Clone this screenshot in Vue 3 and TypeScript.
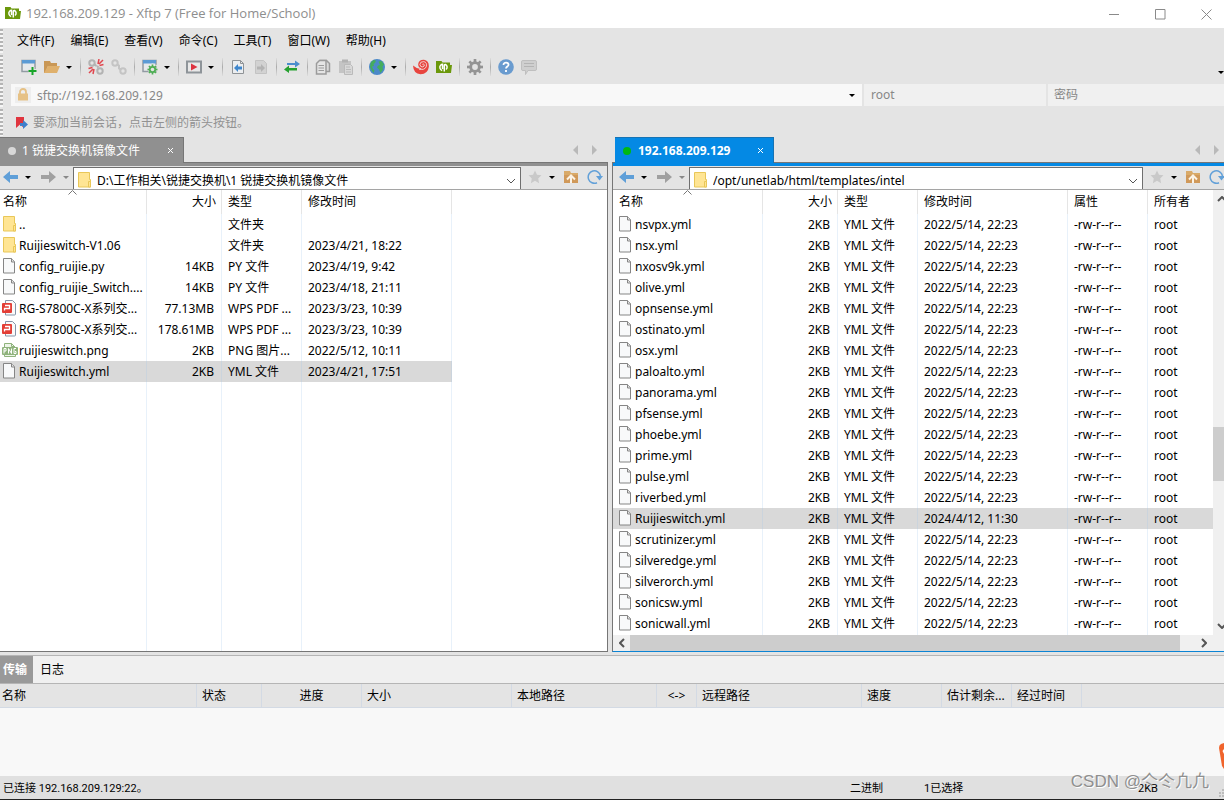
<script setup lang="ts">
import { ref } from 'vue'

interface FileRow {
  icon: string
  name: string
  size: string
  type: string
  time: string
  attr?: string
  owner?: string
  selected?: boolean
}

const windowBody = '<rect x="1" y="1.500" width="13" height="11" fill="#e6e9ec" stroke="#929ba3" stroke-width="1.500"/><rect x="1" y="1" width="13" height="3.500" fill="#5b9bd5"/>'
const gearShape = (cx: number, cy: number, r: number, color: string, hole: string): string => {
  let s = ''
  for (let a = 0; a < 180; a += 45) {
    s += `<rect x="${cx - r}" y="${cy - r / 6}" width="${r * 2}" height="${r / 3}" fill="${color}" transform="rotate(${a} ${cx} ${cy})"/>`
  }
  return s + `<circle cx="${cx}" cy="${cy}" r="${r * 0.72}" fill="${color}"/><circle cx="${cx}" cy="${cy}" r="${r * 0.36}" fill="${hole}"/>`
}

const icons: Record<string, string> = {
  app: '<path d="M0 2h5.500l1 1.500H14V6h2l-1 8H0z" fill="#6b980b"/><path d="M6.200 11.500A3.300 3.300 0 0 1 4.800 6Q5.500 5.200 6.500 5.200V10M8.300 12.500V6.500Q8.500 5.200 9.500 5.500a3 3 0 0 1 .5 5" fill="none" stroke="#fff" stroke-width="1.500"/>',
  add: windowBody + '<path d="M11.500 8v8M7.500 12h8" stroke="#e4e4e4" stroke-width="4"/><path d="M11.500 8v8M7.500 12h8" stroke="#18a52a" stroke-width="2"/>',
  open: '<path d="M0 2h6l1 2h6v3H4L1 14H0z" fill="#c99755"/><path d="M4 7h12l-3 7H0z" fill="#dfb06c"/>',
  unlink: '<g fill="none" stroke="#b3b3b3" stroke-width="2"><circle cx="4" cy="4" r="2.700"/><circle cx="12" cy="12" r="2.700"/></g><path d="M6 5l2.500 2M10.500 8.500L9 7" stroke="#b3b3b3" stroke-width="2"/><g stroke="#e0474f" stroke-width="1.500"><path d="M10 5l1-5M11 5l4-4M11.500 6.500l4-1M6 10l-1 5M5 10l-4 4M4.500 8.500l-4 1"/></g>',
  link: '<g fill="none" stroke="#c4c4c4" stroke-width="2"><circle cx="4" cy="4" r="2.700"/><circle cx="12" cy="12" r="2.700"/><path d="M6 5.500l2 1v3l2 1"/></g>',
  props: windowBody + gearShape(10.5, 10.5, 6, '#e4e4e4', '#e4e4e4') + gearShape(10.5, 10.5, 5, '#4fae55', '#e4e4e4'),
  play: '<rect x="1" y="2.500" width="14" height="11" fill="#e8e8e8" stroke="#8e9499" stroke-width="2"/><path d="M5 4.500l6.500 3.500L5 11.500z" fill="#dd3340"/>',
  docLeft: '<path d="M2.500 1.500h8l3 3v10h-11z" fill="#eceef0" stroke="#8f9396"/><path d="M10.500 1.500v3h3" fill="none" stroke="#8f9396"/><path d="M4 9l4-4v2.500h4v3H8V13z" fill="#3f87cd"/>',
  docRight: '<path d="M2.500 1.500h8l3 3v10h-11z" fill="#d2d2d2" stroke="#c3c3c3"/><path d="M12 9L8 5v2.500H4v3h4V13z" fill="#b3b3b3"/>',
  swap: '<path d="M3 4h8V1.500L16 5l-5 3.500V6H3z" fill="#4b8dcd"/><path d="M13 9H5V6.500L0 10.500 5 14v-2.500h8z" fill="#25a12f"/>',
  copy: '<path d="M5.500 1.500h6l3 3v8h-9z" fill="#d9d9d9" stroke="#9b9b9b" stroke-width="1.500"/><path d="M1.500 4.500l3-3h6.500v13.500H1.500z" fill="#e4e4e4" stroke="#9b9b9b" stroke-width="1.500"/><path d="M3.500 6.500h5.500M3.500 9h5.500M3.500 11.500h5.500" stroke="#9b9b9b"/>',
  paste: '<path d="M1 2h12v12H1z" fill="#c4c4c4"/><path d="M4 0.500h6v3H4z" fill="#b2b2b2"/><path d="M6.500 5.500h6l2 2v8h-8z" fill="#d8d8d8" stroke="#bababa"/><path d="M8 8h4M8 10.500h5M8 13h5" stroke="#bababa"/>',
  globe: '<circle cx="8" cy="8" r="8" fill="#4b89c8"/><path d="M1.800 3.500L4.500 1l2.500.5L6 4 4.500 5 5 7 3 7.500 4 10l1.500 1.500-1 2.500-2-3L1 8zM9.500 2.500l3-.5 2.500 3.500-1.500 2 .5 3-2.500 3.500-1.500-3.500-2-2 1-2 2-.5z" fill="#44ad5d"/>',
  shell: '<path d="M0 6.500Q.500 15 7.500 15.200 15 15 15.800 8 16.200 1.500 11 .8 6 .6 5.200 5 5 9 9 9.800 4.500 10.500 0 6.500z" fill="#e8453f"/><path d="M6 10.200q5.500 1.200 7.200-2.400 1.200-4.400-2.400-5.200-3.800-.2-3.900 2.900.3 2.700 2.900 2.400 2-.6 1.400-2.300-.9-1.200-1.900-.2" fill="none" stroke="#f3dedd" stroke-width=".900"/>',
  gear: gearShape(8, 8, 8, '#949494', '#e4e4e4'),
  help: '<circle cx="8" cy="8" r="7.800" fill="#699bcf"/><path d="M5.500 6c0-3.500 5.500-3 5 0-.2 1.500-2.500 1.700-2.500 3.500M8 11v2" fill="none" stroke="#fff" stroke-width="1.800"/>',
  chat: '<path d="M2 1.500h12q1.500 0 1.500 1.500v7q0 1.500-1.500 1.500H7L4.500 15.500v-4H2Q.500 11.500.500 10V3Q.500 1.500 2 1.500z" fill="#cfcfcf" stroke="#bfbfbf"/><path d="M3 4.500h10M3 7.500h10" stroke="#b4b4b4"/>',
  lock: '<path d="M5 7V5a3 3 0 0 1 6 0v2" fill="none" stroke="#e6c185" stroke-width="1.800"/><rect x="3" y="6.500" width="10" height="7" fill="#e6c185"/>',
  flag: '<path d="M2 2h8v11L6 9.500 2 13z" fill="#e0353f"/><path d="M6 8h3V5l5 4.500L9 14v-3H6z" fill="#3f80cc"/>',
  back: '<path d="M0 8l7-6v4h8v4H7v4z" fill="#5f9fd8"/>',
  forward: '<path d="M15 8L8 2v4H0v4h8v4z" fill="#a0a0a0"/>',
  star: '<path d="M8 1.500l2 4.300 4.500.5-3.300 3.200.9 4.700L8 11.800l-4.100 2.400.9-4.700L1.500 6.300l4.500-.5z" fill="#c9c9c9"/>',
  up: '<path d="M1 2h6l1 2h7v10H1z" fill="#d9aa69"/><path d="M1 6h14v8H1z" fill="#d0995a"/><path d="M4 10.500l4-4 4 4M8 7v7" fill="none" stroke="#fbf3e6" stroke-width="2"/>',
  refresh: '<path d="M10 13.700A6.200 6.200 0 1 1 13.500 7" fill="none" stroke="#62a0d8" stroke-width="1.500"/><path d="M9 7h7L12.500 11.500z" fill="#62a0d8"/>',
  folder: '<path d="M1.500.500h11v7h1v7.500h-12z" fill="#ffe594" stroke="#e9c758"/><path d="M11.500 15V9.500h2V15z" fill="#ffe594" stroke="#e9c758"/>',
  file: '<path d="M1.500.500h8l3 3v11.500H1.500z" fill="#f8f9fa" stroke="#858585"/><path d="M9.500.500v3.500H12.500" fill="#e3e3e3" stroke="#858585"/>',
  pdf: '<path d="M3.500.500h7l3 3v10.500q0 1-1 1h-9z" fill="#fafafa" stroke="#8595a8"/><rect x="0" y="3" width="10" height="10" rx="1" fill="#e33e36"/><path d="M2.500 10.500V8.500h5V5.500H3" fill="none" stroke="#fff" stroke-width="1.300"/>',
  png: '<path d="M2.500 5V1.500h7l4 4M2.500 12v2.500h11V12" fill="#edf5e8" stroke="#8fb37c"/><path d="M9.500 1.500v3h3.500" fill="none" stroke="#8fb37c"/><rect x="0" y="5" width="16" height="8" rx="1" fill="#8fb37c"/><path d="M2 11.500V6.500h2v2.500H2M6.500 11.500v-5l3 5v-5M14 6.500h-2v5h2V9.500h-1" fill="none" stroke="#fff"/>',
}

const menus = ['文件(F)', '编辑(E)', '查看(V)', '命令(C)', '工具(T)', '窗口(W)', '帮助(H)']

interface Tool { kind: 'icon' | 'caret' | 'sep'; icon?: string; label?: string }
const tool = (icon: string, label: string): Tool => ({ kind: 'icon', icon, label })
const caret: Tool = { kind: 'caret' }
const sep: Tool = { kind: 'sep' }
const tools: Tool[] = [
  tool('add', '新建'), tool('open', '打开'), caret, sep,
  tool('unlink', '断开'), tool('link', '重新连接'), sep,
  tool('props', '属性'), caret, sep,
  tool('play', '启动'), caret, sep,
  tool('docLeft', '左传'), tool('docRight', '右传'), sep,
  tool('swap', '同步'), sep,
  tool('copy', '复制'), tool('paste', '粘贴'), sep,
  tool('globe', '编码'), caret, sep,
  tool('shell', 'Xshell'), tool('app', 'Xftp'), sep,
  tool('gear', '选项'), sep,
  tool('help', '帮助'), tool('chat', '反馈'),
]

const row = (icon: string, name: string, size: string, type: string, time: string, selected = false): FileRow =>
  ({ icon, name, size, type, time, selected })

const localRows: FileRow[] = [
  row('folder', '..', '', '文件夹', ''),
  row('folder', 'Ruijieswitch-V1.06', '', '文件夹', '2023/4/21, 18:22'),
  row('file', 'config_ruijie.py', '14KB', 'PY 文件', '2023/4/19, 9:42'),
  row('file', 'config_ruijie_Switch....', '14KB', 'PY 文件', '2023/4/18, 21:11'),
  row('pdf', 'RG-S7800C-X系列交...', '77.13MB', 'WPS PDF ...', '2023/3/23, 10:39'),
  row('pdf', 'RG-S7800C-X系列交...', '178.61MB', 'WPS PDF ...', '2023/3/23, 10:39'),
  row('png', 'ruijieswitch.png', '2KB', 'PNG 图片...', '2022/5/12, 10:11'),
  row('file', 'Ruijieswitch.yml', '2KB', 'YML 文件', '2023/4/21, 17:51', true),
]

const remoteNames = [
  'nsvpx', 'nsx', 'nxosv9k', 'olive', 'opnsense', 'ostinato', 'osx', 'paloalto', 'panorama', 'pfsense',
  'phoebe', 'prime', 'pulse', 'riverbed', 'Ruijieswitch', 'scrutinizer', 'silveredge', 'silverorch', 'sonicsw', 'sonicwall',
]
const remoteRows: FileRow[] = remoteNames.map((n) => {
  const selected = n === 'Ruijieswitch'
  return {
    ...row('file', n + '.yml', '2KB', 'YML 文件', selected ? '2024/4/12, 11:30' : '2022/5/14, 22:23', selected),
    attr: '-rw-r--r--',
    owner: 'root',
  }
})

const panes = [
  { id: 'local', tab: '1 锐捷交换机镜像文件', path: ref('D:\\工作相关\\锐捷交换机\\1 锐捷交换机镜像文件'), rows: localRows, extra: false },
  { id: 'remote', tab: '192.168.209.129', path: ref('/opt/unetlab/html/templates/intel'), rows: remoteRows, extra: true },
]

const queueColumns = [
  { label: '名称', cls: 'q-name' },
  { label: '状态', cls: 'q-state' },
  { label: '进度', cls: 'q-progress' },
  { label: '大小', cls: 'q-size' },
  { label: '本地路径', cls: 'q-local' },
  { label: '<->', cls: 'q-dir' },
  { label: '远程路径', cls: 'q-remote' },
  { label: '速度', cls: 'q-speed' },
  { label: '估计剩余...', cls: 'q-left' },
  { label: '经过时间', cls: 'q-left' },
]

const address = ref('sftp://192.168.209.129')
const user = ref('root')
const password = ref('')
</script>

<template>
  <div class="window">
    <header class="titlebar">
      <svg class="icon" viewBox="0 0 16 16" v-html="icons.app"></svg>
      <span class="title">192.168.209.129 - Xftp 7 (Free for Home/School)</span>
      <div class="win-buttons">
        <button aria-label="最小化"><svg viewBox="0 0 11 11"><path d="M0 5.500h10" /></svg></button>
        <button aria-label="最大化"><svg viewBox="0 0 11 11"><path d="M.500.500h9.500v9.500H.500z" /></svg></button>
        <button aria-label="关闭"><svg viewBox="0 0 11 11"><path d="M.500.500l10 10M10.500.500l-10 10" /></svg></button>
      </div>
    </header>

    <nav class="menubar grip">
      <button v-for="m in menus" :key="m">{{ m }}</button>
    </nav>

    <div class="toolbar grip">
      <template v-for="(t, i) in tools" :key="i">
        <button v-if="t.kind === 'icon'" class="tool" :aria-label="t.label">
          <svg class="icon" viewBox="0 0 16 16" v-html="icons[t.icon!]"></svg>
        </button>
        <button v-else-if="t.kind === 'caret'" class="tool-caret" aria-label="更多"><i class="caret"></i></button>
        <i v-else class="sep"></i>
      </template>
      <button class="overflow" aria-label="工具栏选项"><i class="caret"></i></button>
    </div>

    <div class="address grip">
      <div class="host">
        <span class="lock"><svg class="icon" viewBox="0 0 16 16" v-html="icons.lock"></svg></span>
        <input v-model="address" aria-label="地址" />
        <button aria-label="展开地址"><i class="caret"></i></button>
      </div>
      <input v-model="user" class="cred user" aria-label="用户名" />
      <input v-model="password" class="cred pass" type="password" placeholder="密码" aria-label="密码" />
    </div>

    <div class="hint grip">
      <button aria-label="添加当前会话"><svg class="icon" viewBox="0 0 16 16" v-html="icons.flag"></svg></button>
      <span>要添加当前会话，点击左侧的箭头按钮。</span>
    </div>

    <main class="panes">
      <section v-for="p in panes" :key="p.id" class="pane" :class="p.id">
        <div class="tabs">
          <div class="tab">
            <i class="dot"></i>
            <span class="tab-label">{{ p.tab }}</span>
            <button aria-label="关闭标签"><svg viewBox="0 0 5 5"><path d="M0 0l5 5M5 0L0 5" /></svg></button>
          </div>
          <div class="tab-nav">
            <button aria-label="上一个标签"><svg viewBox="0 0 5 10"><path d="M5 0v10L0 5z" /></svg></button>
            <button aria-label="下一个标签"><svg viewBox="0 0 5 10"><path d="M0 0v10l5-5z" /></svg></button>
          </div>
        </div>
        <div class="frame">
          <div class="nav">
            <div class="nav-left">
              <button aria-label="后退"><svg class="icon" viewBox="0 0 16 16" v-html="icons.back"></svg></button>
              <button class="drop" aria-label="后退历史"><i class="caret"></i></button>
              <button aria-label="前进"><svg class="icon" viewBox="0 0 16 16" v-html="icons.forward"></svg></button>
              <button class="drop" aria-label="前进历史"><i class="caret dim"></i></button>
            </div>
            <div class="path">
              <svg class="icon" viewBox="0 0 16 16" v-html="icons.folder"></svg>
              <input v-model="p.path.value" aria-label="路径" />
              <button aria-label="展开路径"><svg class="chev" viewBox="0 0 10 6"><path d="M1 1l4 4 4-4" /></svg></button>
            </div>
            <div class="nav-right">
              <button aria-label="收藏"><svg class="icon" viewBox="0 0 16 16" v-html="icons.star"></svg></button>
              <button class="drop" aria-label="收藏列表"><i class="caret"></i></button>
              <button class="up" aria-label="上级目录"><svg class="icon" viewBox="0 0 16 16" v-html="icons.up"></svg></button>
              <button aria-label="刷新"><svg class="icon" viewBox="0 0 16 16" v-html="icons.refresh"></svg></button>
            </div>
          </div>
          <div class="body">
            <div class="list">
              <table>
                <colgroup>
                  <col class="c-name" /><col class="c-size" /><col class="c-type" /><col class="c-time" />
                  <template v-if="p.extra"><col class="c-attr" /><col /></template>
                  <col v-else />
                </colgroup>
                <thead>
                  <tr>
                    <th class="name">名称<svg class="sort" viewBox="0 0 9 5"><path d="M.500 4.500l4-4 4 4" /></svg></th>
                    <th class="size">大小</th>
                    <th>类型</th>
                    <th>修改时间</th>
                    <template v-if="p.extra"><th>属性</th><th class="last">所有者</th></template>
                    <th v-else class="last"></th>
                  </tr>
                </thead>
                <tbody>
                  <tr v-for="(r, i) in p.rows" :key="i" :class="{ selected: r.selected }">
                    <td class="name">
                      <div class="file"><svg class="icon" viewBox="0 0 16 16" v-html="icons[r.icon]"></svg><span>{{ r.name }}</span></div>
                    </td>
                    <td class="size">{{ r.size }}</td>
                    <td>{{ r.type }}</td>
                    <td>{{ r.time }}</td>
                    <template v-if="p.extra"><td>{{ r.attr }}</td><td class="last">{{ r.owner }}</td></template>
                    <td v-else class="last blank"></td>
                  </tr>
                  <tr class="filler">
                    <td></td><td></td><td></td><td></td>
                    <td v-if="p.extra"></td>
                    <td class="last"></td>
                  </tr>
                </tbody>
              </table>
            </div>
            <div v-if="p.extra" class="vscroll">
              <button aria-label="向上滚动"><svg class="arrow" viewBox="0 0 10 6"><path d="M1 5l4-4 4 4" /></svg></button>
              <div class="v-track"><i class="v-before"></i><i class="v-thumb"></i><i class="v-after"></i></div>
              <button aria-label="向下滚动"><svg class="arrow" viewBox="0 0 10 6"><path d="M1 1l4 4 4-4" /></svg></button>
            </div>
          </div>
          <div v-if="p.extra" class="hscroll">
            <button aria-label="向左滚动"><svg viewBox="0 0 6 10"><path d="M5 1L1 5l4 4" /></svg></button>
            <i class="h-thumb"></i>
            <button class="h-end" aria-label="向右滚动"><svg viewBox="0 0 6 10"><path d="M1 1l4 4-4 4" /></svg></button>
          </div>
        </div>
      </section>
    </main>

    <section class="queue">
      <div class="queue-tabs">
        <button class="active">传输</button>
        <button>日志</button>
      </div>
      <table class="queue-table">
        <thead>
          <tr>
            <th v-for="c in queueColumns" :key="c.label" :class="c.cls">{{ c.label }}</th>
            <th class="q-rest"></th>
          </tr>
        </thead>
      </table>
      <svg class="bubble" viewBox="0 0 5 28"><path d="M5 1L2 2Q0 3 0 6l3 18 2 3z" fill="#f0642c" /><path d="M5 7L3.500 9l1.500 3z" fill="#fff" /></svg>
    </section>

    <footer class="status">
      <span class="s-conn">已连接 192.168.209.129:22。</span>
      <span class="s-mode">二进制</span>
      <span class="s-sel">1已选择</span>
      <span class="s-size">2KB</span>
      <span class="watermark">CSDN @亽仒凢凢</span>
      <svg class="resize" viewBox="0 0 5 8"><path d="M3 0h2v2H3zM3 3h2v2H3zM0 3h2v2H0zM3 6h2v2H3zM0 6h2v2H0z" fill="#bcbcbc" /></svg>
    </footer>
  </div>
</template>

<style>
html,
body {
  margin: 0;
  overflow: hidden;
}
</style>

<style scoped>
.window {
  display: flex;
  flex-direction: column;
  height: 100vh;
  box-sizing: border-box;
  border-bottom: 1px solid #222;
  background: #e4e4e4;
  color: #000;
  font: 12px/20px "Noto Sans", "Noto Sans CJK SC", sans-serif;
  overflow: hidden;
}
button,
input {
  margin: 0;
  padding: 0;
  border: 0;
  background: none;
  color: inherit;
  font: inherit;
  outline: none;
  min-width: 0;
}
button {
  display: flex;
  align-items: center;
  justify-content: center;
  flex: none;
}
svg {
  flex: none;
  display: block;
}
.icon {
  width: 16px;
  height: 16px;
}
.caret {
  border: 3px solid transparent;
  border-top-color: #000;
  border-bottom: 0;
}
.caret.dim {
  border-top-color: #888;
}

.titlebar {
  display: flex;
  align-items: center;
  height: 28px;
  padding-left: 5px;
  background: #fff;
  color: #8e8e8e;
  flex: none;
}
.title {
  flex: 1;
  margin-left: 5px;
  padding-bottom: 2px;
  font-family: "Open Sans", "Noto Sans", sans-serif;
  font-size: 13px;
}
.titlebar > .icon {
  margin-bottom: 3px;
}
.win-buttons {
  display: flex;
}
.win-buttons button {
  width: 46px;
  height: 24px;
  padding-left: 10px;
}
.win-buttons svg {
  width: 11px;
  height: 11px;
  fill: none;
  stroke: #8a8a8a;
}

.grip {
  display: flex;
  align-items: center;
  position: relative;
  flex: none;
}
.grip::before {
  content: "";
  position: absolute;
  left: 0;
  top: 1px;
  bottom: 1px;
  width: 3px;
  background: repeating-linear-gradient(#b4b4b4 0 2px, #f6f6f6 2px 4px);
}
.menubar {
  height: 26px;
  padding-left: 17px;
  gap: 16px;
}
.toolbar {
  height: 28px;
  padding: 0 0 2px 17px;
  box-sizing: border-box;
}
.tool {
  width: 23px;
  height: 24px;
}
.tool-caret {
  width: 13px;
  height: 24px;
  padding-right: 2px;
}
.sep {
  width: 1px;
  height: 18px;
  margin: 0 3px 0 4px;
  background: linear-gradient(#ddd, #ababab 50%, #ddd);
}
.overflow {
  width: 6px;
  height: 10px;
  margin-left: auto;
  margin-top: 10px;
}
.address {
  height: 26px;
  padding-left: 11px;
  gap: 2px;
  color: #878787;
}
.host {
  flex: 1;
  display: flex;
  align-items: center;
  height: 22px;
  background: #f8f8f8;
}
.lock {
  margin: 0 6px 0 4px;
  background: #eee;
}
.host input {
  flex: 1;
  height: 22px;
}
.host button {
  width: 20px;
  height: 22px;
}
.cred {
  height: 22px;
  box-sizing: border-box;
  padding: 0 0 2px 7px;
  background: #f0f0f0;
}
.cred::placeholder {
  color: #878787;
}
.user {
  width: 182px;
}
.pass {
  width: 176px;
  padding-left: 6px;
}
.hint {
  height: 29px;
  padding-left: 14px;
  color: #929292;
}
.hint button {
  margin-right: 3px;
}

.panes {
  flex: 1;
  display: grid;
  grid-template-columns: minmax(0, 608fr) minmax(0, 612fr);
  column-gap: 4px;
  min-height: 0;
}
.pane {
  display: flex;
  flex-direction: column;
  min-width: 0;
  min-height: 0;
  --accent: #909090;
}
.remote {
  --accent: #0489e4;
}
.tabs {
  display: flex;
  height: 25px;
  flex: none;
  justify-content: space-between;
}
.tab {
  position: relative;
  display: flex;
  align-items: center;
  width: 184px;
  height: 26px;
  box-sizing: border-box;
  padding: 0 9px 0 8px;
  border: 1px solid #767676;
  border-width: 1px 1px 0 0;
  background: var(--accent);
  color: #fff;
}
.remote .tab {
  width: 159px;
  margin-left: 3px;
  border-color: #1673b4;
  font-weight: bold;
}
.dot {
  width: 8px;
  height: 8px;
  border-radius: 4px;
  background: #d8d8d8;
  margin-right: 6px;
}
.remote .dot {
  background: #00b913;
  margin-right: 7px;
}
.tab-label {
  flex: 1;
}
.tab button {
  width: 8px;
  height: 20px;
}
.tab svg {
  width: 5px;
  height: 5px;
  fill: none;
  stroke: #fff;
}
.tab-nav {
  display: flex;
  gap: 14px;
  padding-right: 11px;
}
.remote .tab-nav {
  padding-right: 5px;
}
.tab-nav svg {
  width: 5px;
  height: 10px;
  fill: #b9b9b9;
}
.frame {
  flex: 1;
  display: flex;
  flex-direction: column;
  min-height: 0;
  border: 1px solid #767676;
  border-left: 0;
  background: #fff;
}
.remote .frame {
  border-left: 1px solid #767676;
  border-right: 0;
  border-bottom-color: #0c84d4;
}
.nav {
  display: flex;
  height: 27px;
  box-sizing: border-box;
  border-top: 3px solid var(--accent);
  border-bottom: 1px solid #a5a5a5;
  background: #e4e4e4;
  flex: none;
  overflow: hidden;
}
.nav-left {
  display: flex;
  width: 70px;
  padding-left: 3px;
  flex: none;
}
.nav-left button,
.nav-right button {
  height: 22px;
}
.nav-left .drop {
  width: 15px;
  padding-left: 2px;
  margin-right: 7px;
}
.remote .nav-left {
  width: 70px;
  padding-left: 6px;
}
.path {
  flex: 1;
  display: flex;
  align-items: center;
  margin-top: 1px;
  border: 1px solid #6f6f6f;
  border-bottom: 0;
  background: #fff;
  min-width: 0;
}
.path .icon {
  margin: 2px 4px 0 3px;
}
.path input {
  flex: 1;
  height: 20px;
  box-sizing: border-box;
  padding-top: 4px;
}
.path button {
  width: 18px;
  height: 20px;
  padding-top: 5px;
}
.chev {
  width: 10px;
  height: 6px;
  fill: none;
  stroke: #555;
  stroke-width: 1px;
}
.nav-right {
  display: flex;
  width: 86px;
  padding-left: 6px;
  box-sizing: border-box;
  flex: none;
}
.remote .nav-right {
  width: 81px;
}
.nav-right .drop {
  width: 17px;
}
.nav-right .up {
  margin: 0 8px 0 3px;
}
.body {
  flex: 1;
  display: flex;
  min-height: 0;
}
.list {
  flex: 1;
  min-width: 0;
  position: relative;
}
table {
  border-collapse: separate;
  border-spacing: 0;
  table-layout: fixed;
  width: 100%;
}
.list table {
  height: 100%;
}
.c-name {
  width: 147px;
}
.remote .c-name {
  width: 150px;
}
.c-size {
  width: 75px;
}
.c-type,
.c-attr {
  width: 80px;
}
.c-time {
  width: 150px;
}
th,
td {
  padding: 0 0 0 6px;
  border-right: 1px solid #e8f1fa;
  font-weight: normal;
  text-align: left;
  white-space: nowrap;
  overflow: hidden;
}
.list thead tr {
  height: 24px;
}
.list tbody tr {
  height: 21px;
}
.list tbody .filler {
  height: auto;
}
.list th {
  border-color: #e5e5e5;
}
.list th.name {
  position: relative;
  padding-left: 3px;
}
.remote .list th.name {
  padding-left: 6px;
}
.list .last {
  border-right: 0;
}
th.size,
td.size {
  padding: 0 7px 0 0;
  text-align: right;
}
th.size {
  padding-right: 5px;
}
td.name {
  padding-left: 2px;
}
.remote td.name {
  padding-left: 5px;
}
.file {
  display: flex;
  align-items: center;
  gap: 1px;
}
.file .icon {
  margin-bottom: 1px;
}
.selected td {
  background: #d9d9d9;
  border-color: #cbd4dd;
}
.selected td.blank {
  background: none;
}
.sort {
  position: absolute;
  top: 0;
  left: 50%;
  width: 9px;
  height: 5px;
  margin-left: -5px;
  fill: none;
  stroke: #777;
}
.vscroll {
  width: 11px;
  display: flex;
  flex-direction: column;
  background: #f0f0f0;
  overflow: hidden;
  flex: none;
}
.vscroll button {
  width: 17px;
  height: 18px;
}
.arrow,
.hscroll svg {
  fill: none;
  stroke: #555;
  stroke-width: 2px;
}
.arrow {
  width: 10px;
  height: 6px;
}
.v-track {
  flex: 1;
  display: flex;
  flex-direction: column;
}
.v-before {
  flex: 219;
}
.v-thumb {
  flex: 54;
  background: #cdcdcd;
}
.v-after {
  flex: 136;
}
.hscroll {
  display: flex;
  height: 16px;
  background: #f0f0f0;
  flex: none;
}
.hscroll button {
  width: 17px;
  height: 16px;
}
.hscroll svg {
  width: 6px;
  height: 10px;
}
.h-thumb {
  flex: 1;
  margin-right: 15px;
  background: #cdcdcd;
}
.hscroll .h-end {
  margin-right: 12px;
}

.queue {
  position: relative;
  flex: none;
  height: 121px;
  margin-top: 3px;
  border-top: 1px solid #b5b5b5;
  box-sizing: border-box;
  background: #f8f8f8;
}
.queue-tabs {
  display: flex;
  height: 27px;
  background: #f0f0f0;
  border-bottom: 1px solid #b5b5b5;
}
.queue-tabs button {
  padding: 0 7px;
}
.queue-tabs .active {
  padding: 0 6px 0 3px;
  background: #999;
  color: #fff;
  font-weight: bold;
}
.queue-table th {
  height: 23px;
  box-sizing: content-box;
  padding: 0 0 0 5px;
  background: #e4e4e4;
  border-right: 1px solid #d3dae4;
  border-bottom: 1px solid #d3dae4;
}
.queue-table .q-name {
  width: 194px;
  padding-left: 2px;
}
.queue-table .q-state {
  width: 59px;
}
.queue-table .q-progress {
  width: 99px;
  padding: 0;
  text-align: center;
}
.queue-table .q-size {
  width: 144px;
}
.queue-table .q-local {
  width: 139px;
}
.queue-table .q-dir {
  width: 39px;
  padding: 0;
  text-align: center;
}
.queue-table .q-remote {
  width: 159px;
}
.queue-table .q-speed {
  width: 74px;
}
.queue-table .q-left {
  width: 64px;
}
.queue-table .q-rest {
  border-right: 0;
}
.bubble {
  position: absolute;
  right: 0;
  top: 86px;
  width: 5px;
  height: 28px;
}

.status {
  position: relative;
  display: flex;
  align-items: center;
  height: 23px;
  padding: 2px 0 0 3px;
  box-sizing: border-box;
  background: #e0e0e0;
  font-family: Roboto, "Noto Sans CJK SC", sans-serif;
  font-size: 11px;
  flex: none;
}
.s-conn {
  flex: 1;
}
.s-mode {
  width: 74px;
}
.s-sel {
  width: 214px;
}
.s-size {
  width: 86px;
}
.watermark {
  position: absolute;
  right: 15px;
  bottom: 7px;
  color: #8f8f8f;
  font-family: "Liberation Sans", "Noto Sans CJK SC", sans-serif;
  font-size: 17px;
  text-shadow: 1px 1px 0 #fff;
}
.resize {
  position: absolute;
  right: 0;
  bottom: 2px;
  width: 5px;
  height: 8px;
}
</style>
